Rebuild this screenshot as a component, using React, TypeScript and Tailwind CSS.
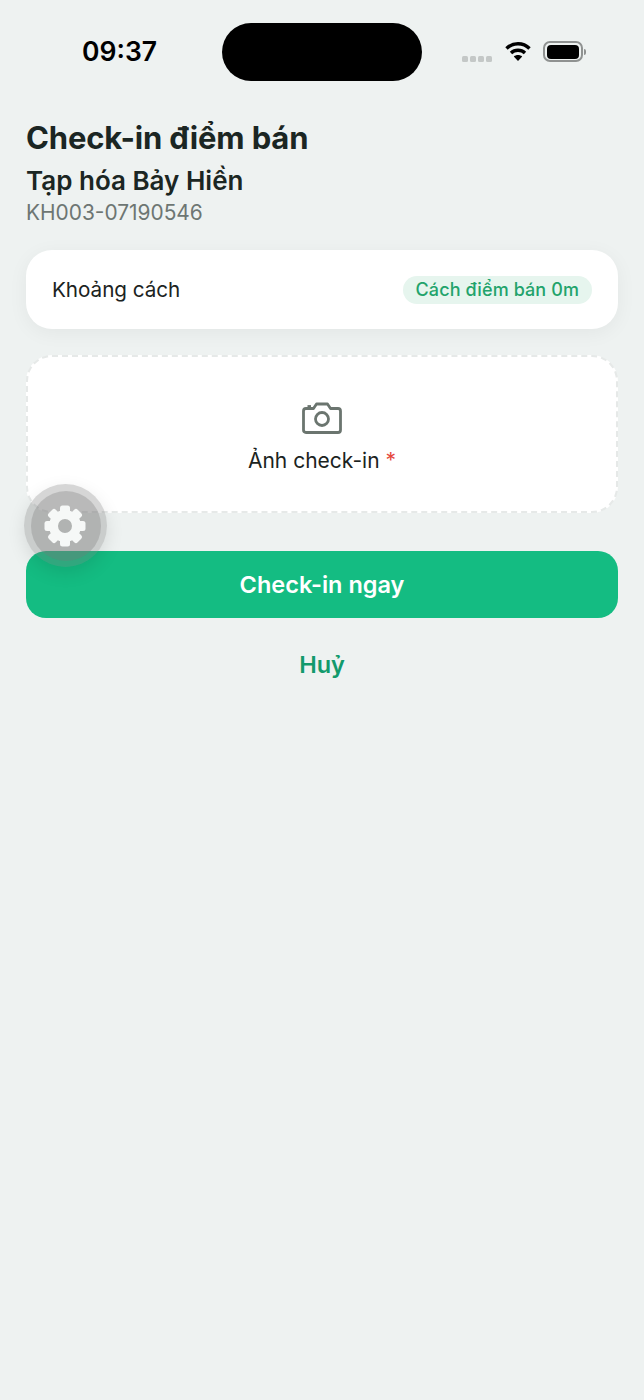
export default function App() {
  const teeth = [0, 45, 90, 135, 180, 225, 270, 315];
  return (
    <div className="relative min-h-[1400px] w-[644px] bg-[#eef2f1] font-['Inter','Noto_Sans',sans-serif] text-[#1b2321]">
      <div className="grid grid-cols-[222px_200px_1fr] pt-[23px]">
        <div className="flex h-[58px] items-center pl-[82px] text-[26.5px] font-semibold text-black">09:37</div>
        <div className="h-[58px] rounded-[29px] bg-black" />
        <div className="flex h-[58px] items-center pl-[40px]">
          <div className="mt-[14px] flex gap-[2px]">
            <span className="h-[6px] w-[6px] rounded-[1.5px] bg-[#c4c8c7]" />
            <span className="h-[6px] w-[6px] rounded-[1.5px] bg-[#c4c8c7]" />
            <span className="h-[6px] w-[6px] rounded-[1.5px] bg-[#c4c8c7]" />
            <span className="h-[6px] w-[6px] rounded-[1.5px] bg-[#c4c8c7]" />
          </div>
          <svg className="mb-[2px] ml-[13px]" width="26" height="20" viewBox="0 0 26 20" fill="none" stroke="black" strokeWidth="3.4">
            <path d="M1.5 7.5C7.8 1.2 18.2 1.2 24.5 7.5" />
            <path d="M6 12C9.8 8.4 16.2 8.4 20 12" />
            <path d="M13 20L8.8 15.6C11 13.6 15 13.6 17.2 15.6Z" fill="black" stroke="none" />
          </svg>
          <div className="mb-[1px] ml-[12px] flex items-center">
            <div className="flex h-[21px] w-[40px] items-center justify-center rounded-[7px] border-2 border-[#8f9291]">
              <div className="h-[14px] w-[32px] rounded-[4px] bg-black" />
            </div>
            <div className="ml-[1px] h-[6px] w-[2px] rounded-r-full bg-[#8f9291]" />
          </div>
        </div>
      </div>

      <div className="px-[26px] pt-[38px]">
        <h1 className="text-[31px] leading-[38px] font-bold tracking-[-0.15px] text-[#1b2623]">Check-in điểm bán</h1>
        <div className="mt-[7px] text-[26px] leading-[34px] font-semibold text-[#1b2623]">Tạp hóa Bảy Hiền</div>
        <div className="mt-[2px] text-[20.9px] leading-[26px] text-[#6d7673]">KH003-07190546</div>

        <div className="mt-[24px] flex h-[79px] items-center justify-between rounded-[26px] bg-white px-[26px] shadow-[0_4px_20px_rgba(0,0,0,0.05)]">
          <span className="text-[20.7px] tracking-[-0.05px] text-[#1b2321]">Khoảng cách</span>
          <span className="flex h-[28px] items-center rounded-full bg-[#e6f5ee] px-[13px] text-[18px] font-medium tracking-[0.1px] text-[#22a36b]">Cách điểm bán 0m</span>
        </div>

        <div className="mt-[26px] flex h-[158px] flex-col items-center rounded-[26px] border-2 border-dashed border-[#e6e9e8] bg-white pt-[45px]">
          <svg width="40" height="32" viewBox="0 0 40 32" fill="none" stroke="#6b756f" strokeWidth="2.8" strokeLinejoin="round">
            <path d="M4 6.5H11.5L14.5 2H25.5L28.5 6.5H36Q38.5 6.5 38.5 9V28Q38.5 30.5 36 30.5H4Q1.5 30.5 1.5 28V9Q1.5 6.5 4 6.5Z" />
            <circle cx="20" cy="17" r="6.5" />
            <path d="M5.5 4.5H9" />
          </svg>
          <div className="mt-[13px] text-[21px] leading-[28px] text-[#1b2321]">
            Ảnh check-in <span className="text-[#e5483d]">*</span>
          </div>
        </div>

        <button className="mt-[38px] flex h-[67px] w-full items-center justify-center rounded-[20px] bg-[#14bc82] text-[23.5px] font-semibold text-white">Check-in ngay</button>
        <div className="mt-[29px] text-center text-[23.5px] leading-[36px] font-semibold text-[#129a6c]">Huỷ</div>
      </div>

      <div className="absolute top-[484px] left-[24px] flex h-[83px] w-[83px] items-center justify-center rounded-full bg-[rgba(120,120,120,0.3)] shadow-[0_6px_18px_rgba(0,0,0,0.1)]">
        <div className="flex h-[70px] w-[70px] items-center justify-center rounded-full bg-[rgba(120,120,120,0.3)]">
          <svg className="mr-[1px]" width="42" height="42" viewBox="0 0 42 42" fill="none">
            <circle cx="21" cy="21" r="11.5" stroke="#f6f8f7" strokeWidth="9" />
            {teeth.map((a) => (
              <rect key={a} x="16" y="0.5" width="10" height="10" rx="2.5" fill="#f6f8f7" transform={`rotate(${a} 21 21)`} />
            ))}
          </svg>
        </div>
      </div>
    </div>
  );
}
